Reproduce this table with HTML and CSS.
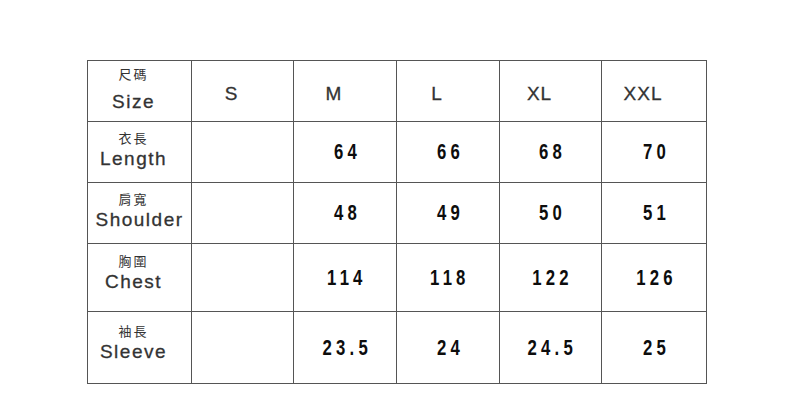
FILE: index.html
```html
<!DOCTYPE html>
<html>
<head>
<meta charset="utf-8">
<link rel="stylesheet" href="styles.css">
</head>
<body>
<div class="page">
  <div class="chart">
    <div class="cell label label-head"><span class="zh">尺碼</span><span class="en">Size</span></div>
    <div class="cell size">S</div>
    <div class="cell size">M</div>
    <div class="cell size">L</div>
    <div class="cell size">XL</div>
    <div class="cell size">XXL</div>

    <div class="cell label"><span class="zh">衣長</span><span class="en">Length</span></div>
    <div class="cell num"></div>
    <div class="cell num"><span class="num-text">64</span></div>
    <div class="cell num"><span class="num-text">66</span></div>
    <div class="cell num"><span class="num-text">68</span></div>
    <div class="cell num"><span class="num-text">70</span></div>

    <div class="cell label label-wide"><span class="zh">肩寬</span><span class="en">Shoulder</span></div>
    <div class="cell num"></div>
    <div class="cell num"><span class="num-text">48</span></div>
    <div class="cell num"><span class="num-text">49</span></div>
    <div class="cell num"><span class="num-text">50</span></div>
    <div class="cell num"><span class="num-text">51</span></div>

    <div class="cell label label-up"><span class="zh">胸圍</span><span class="en">Chest</span></div>
    <div class="cell num"></div>
    <div class="cell num"><span class="num-text">114</span></div>
    <div class="cell num"><span class="num-text">118</span></div>
    <div class="cell num"><span class="num-text">122</span></div>
    <div class="cell num"><span class="num-text">126</span></div>

    <div class="cell label label-up"><span class="zh">袖長</span><span class="en">Sleeve</span></div>
    <div class="cell num"></div>
    <div class="cell num"><span class="num-text">23.5</span></div>
    <div class="cell num"><span class="num-text">24</span></div>
    <div class="cell num"><span class="num-text">24.5</span></div>
    <div class="cell num"><span class="num-text">25</span></div>
  </div>
</div>
</body>
</html>
```
FILE: styles.css
```css
html, body {
  margin: 0;
  padding: 0;
  background: #ffffff;
}
.page {
  width: 790px;
  height: 408px;
  padding: 60px 0 0 87px;
  box-sizing: border-box;
}
.chart {
  display: grid;
  grid-template-columns: 104px 102px 103px 103px 102px 105px;
  grid-template-rows: 61px 61px 61px 68px 72px;
  width: max-content;
  border-left: 1px solid #555555;
  border-top: 1px solid #555555;
}
.cell {
  box-sizing: content-box;
  border-right: 1px solid #555555;
  border-bottom: 1px solid #555555;
  display: flex;
  align-items: center;
  justify-content: center;
  font-family: "Liberation Sans", Arial, sans-serif;
  color: #333333;
}
.label {
  flex-direction: column;
  gap: 3px;
  padding-bottom: 5px;
  padding-right: 12px;
  box-sizing: border-box;
}
.label-head {
  gap: 10px;
  padding-bottom: 5px;
}
.label-wide {
  padding-right: 0;
}
.label-wide .zh {
  margin-right: 12px;
}
.label-up {
  padding-bottom: 10px;
}
.zh {
  font-family: "Noto Sans CJK TC", "Noto Sans CJK SC", sans-serif;
  font-size: 13px;
  line-height: 16px;
  letter-spacing: 2px;
  color: #333333;
}
.en {
  font-size: 19px;
  line-height: 20px;
  letter-spacing: 1.5px;
  color: #333333;
  -webkit-text-stroke: 0.3px #333333;
  white-space: nowrap;
}
.size {
  font-size: 19px;
  letter-spacing: 1px;
  padding-top: 6px;
  padding-right: 22px;
  -webkit-text-stroke: 0.3px #333333;
  box-sizing: border-box;
}
.num {
  font-family: "Liberation Sans", Arial, sans-serif;
  font-weight: bold;
  font-size: 22px;
  color: #0d0d0d;
}
.num-text {
  display: inline-block;
  letter-spacing: 5.5px;
  padding-left: 5.5px;
  transform: scaleX(0.76);
}
```
